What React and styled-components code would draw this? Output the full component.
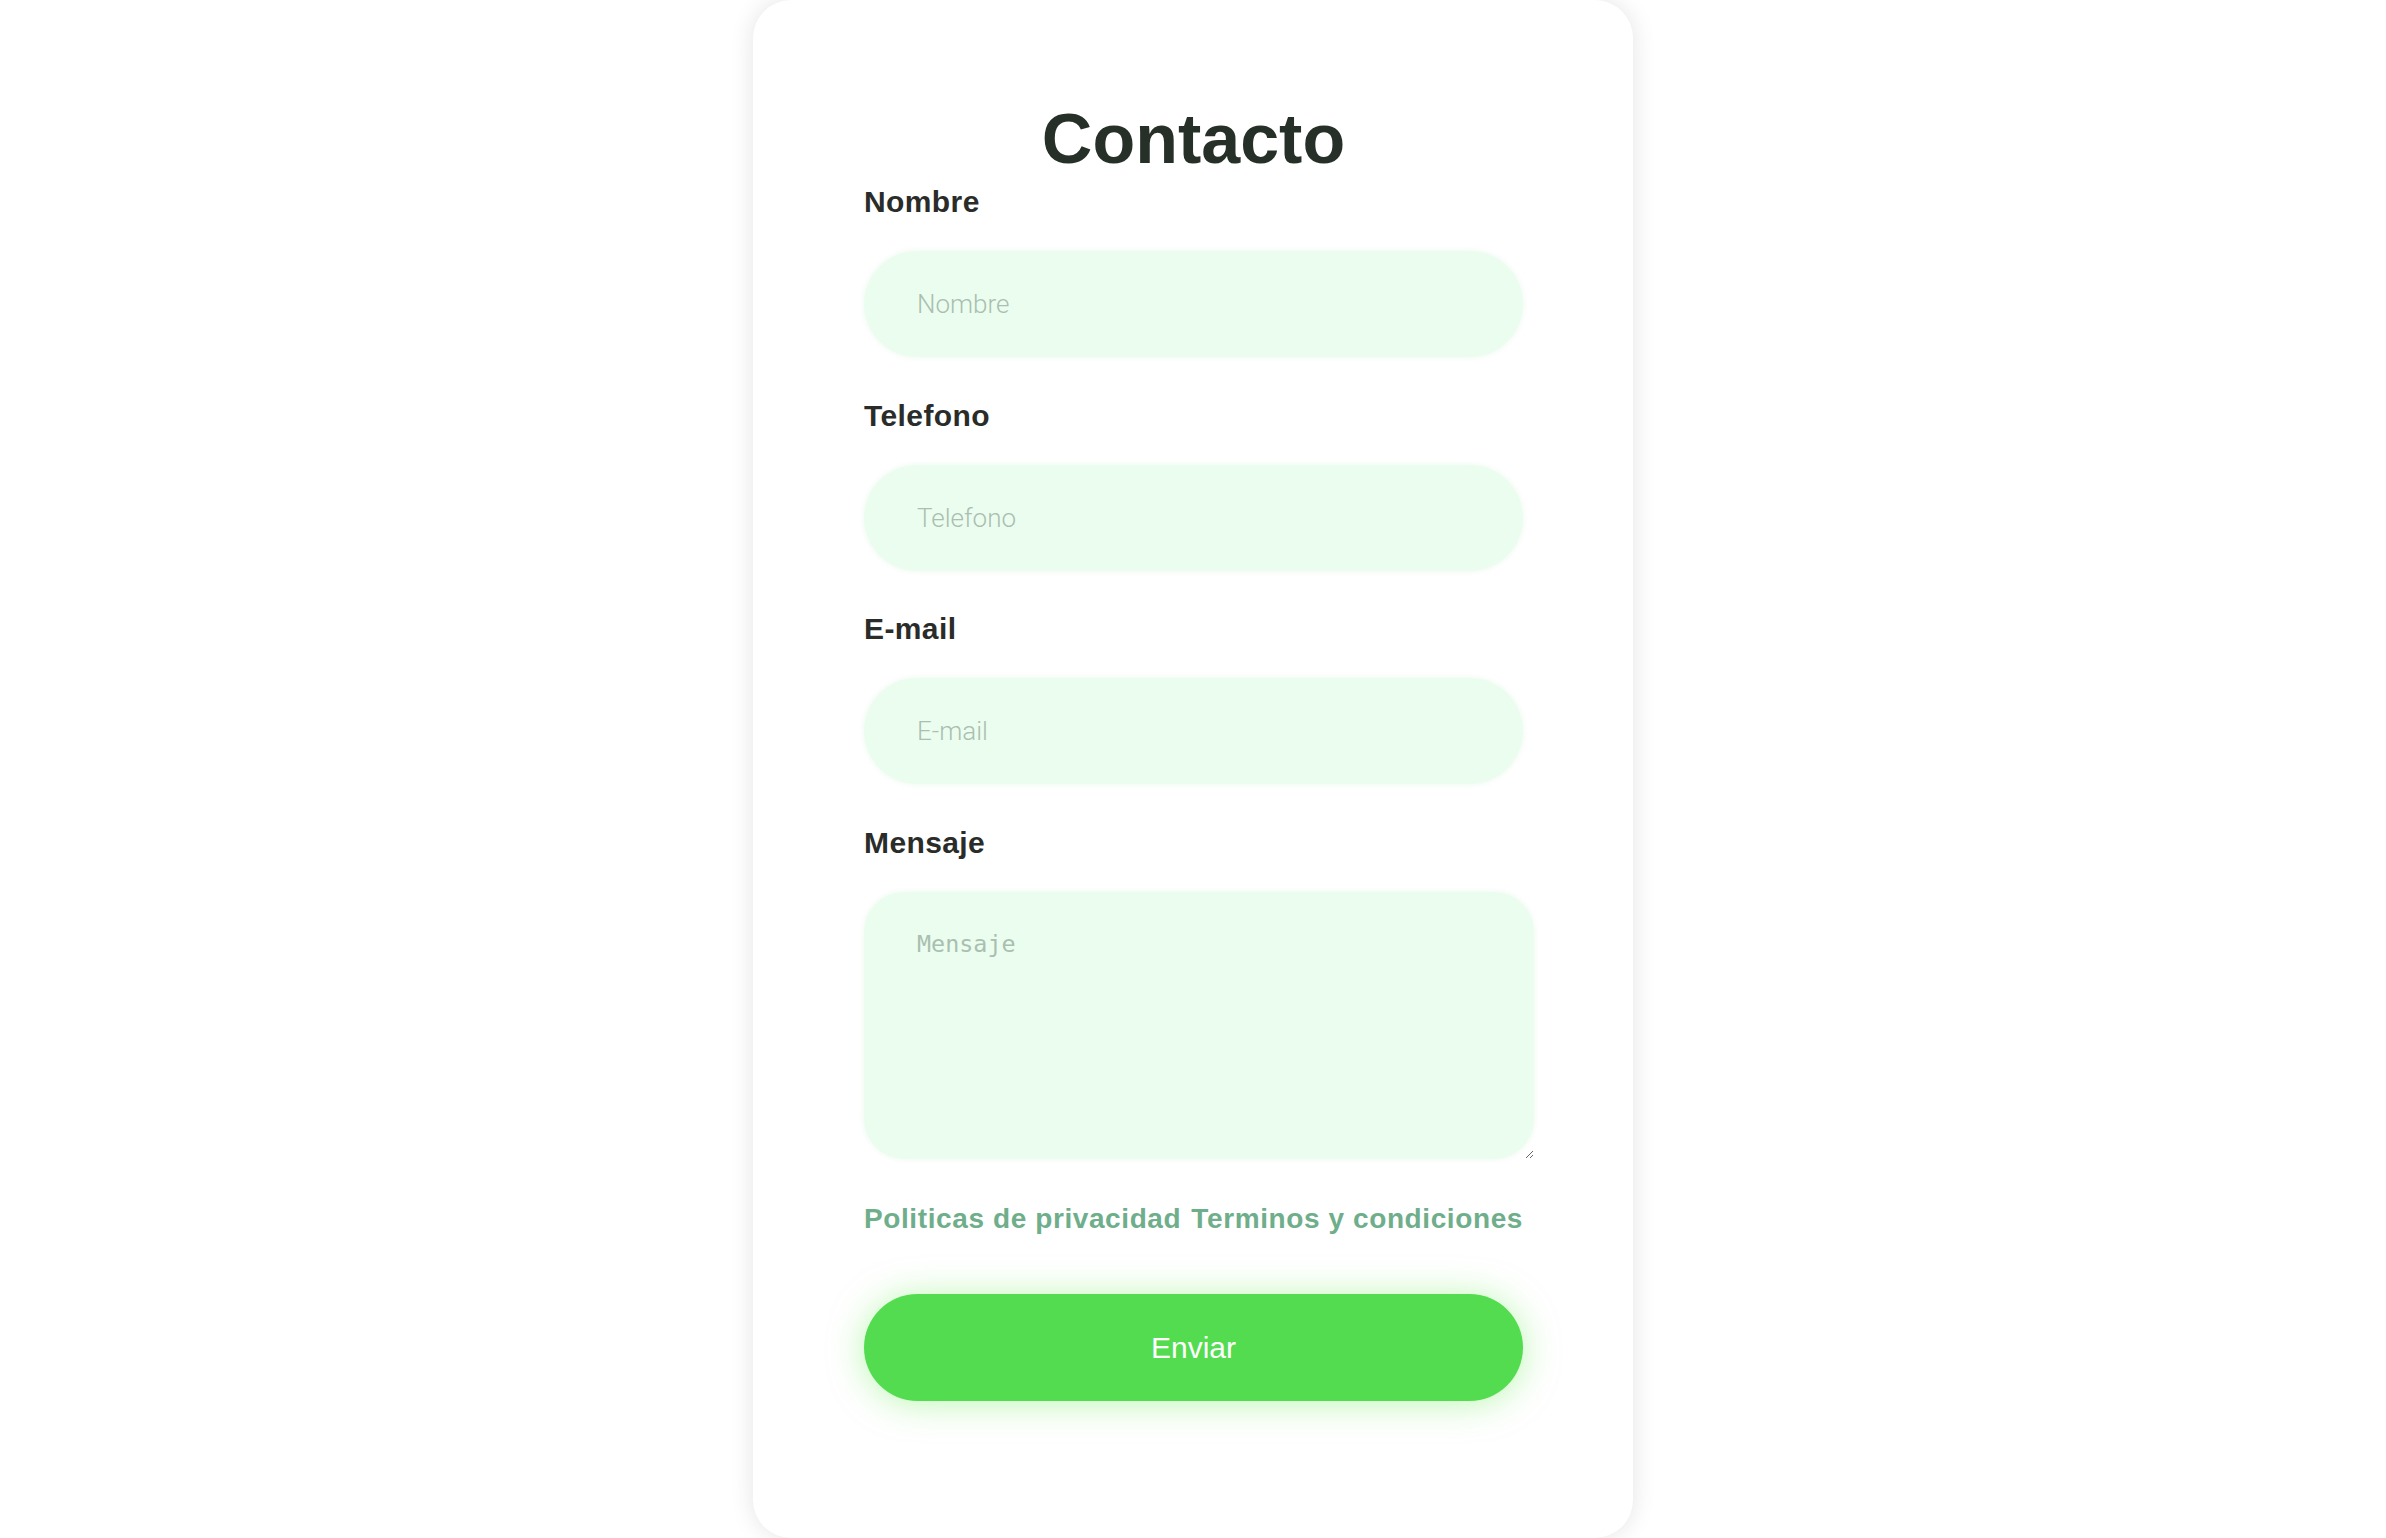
import styled, { createGlobalStyle } from "styled-components"

const GlobalStyle = createGlobalStyle`
  html, body {
    margin: 0;
    padding: 0;
    background: #ffffff;
  }
  body {
    font-family: "Liberation Sans", Arial, sans-serif;
    overflow: hidden;
  }
`;

export default function App() {
  return (
    <>
      <GlobalStyle />
      <Page>
        <Card>
          <Title>Contacto</Title>
          <Form onSubmit={(e) => e.preventDefault()}>
            <Field>
              <Label htmlFor="nombre">Nombre</Label>
              <Input id="nombre" type="text" placeholder="Nombre" />
            </Field>
            <Field>
              <Label htmlFor="telefono">Telefono</Label>
              <Input id="telefono" type="tel" placeholder="Telefono" />
            </Field>
            <Field>
              <Label htmlFor="email">E-mail</Label>
              <Input id="email" type="email" placeholder="E-mail" />
            </Field>
            <Field>
              <Label htmlFor="mensaje">Mensaje</Label>
              <Textarea id="mensaje" placeholder="Mensaje" />
            </Field>

            {/* Links */}
            <LinkRow>
              <LegalLink href="#">Politicas de privacidad</LegalLink>
              <LegalLink href="#">Terminos y condiciones</LegalLink>
            </LinkRow>

            <SendButton type="submit">Enviar</SendButton>
          </Form>
        </Card>
      </Page>
    </>
  )
}

const Page = styled.div`
  display: flex;
  justify-content: center;
  min-height: 100vh;
`;

const Card = styled.div`
  box-sizing: border-box;
  width: 880px;
  height: 1538px;
  padding: 99px 110px 0 111px;
  background: #ffffff;
  border-radius: 38px;
  box-shadow: 0 0 24px rgba(0, 0, 0, 0.11);
  display: flex;
  flex-direction: column;
`;

const Title = styled.h1`
  margin: 0 0 6px;
  text-align: center;
  font-family: "Liberation Sans", Arial, sans-serif;
  font-size: 70px;
  font-weight: 700;
  line-height: 80px;
  color: #263028;
`;

const Form = styled.form`
  display: flex;
  flex-direction: column;
`;

const Field = styled.div`
  display: flex;
  flex-direction: column;
  margin-bottom: 41.5px;
`;

const Label = styled.label`
  margin-bottom: 31.5px;
  font-size: 30px;
  line-height: 34.5px;
  font-weight: 700;
  letter-spacing: 0.4px;
  color: #2a2c2a;
`;

const Input = styled.input`
  box-sizing: border-box;
  width: 659px;
  height: 106px;
  padding: 0 53px;
  border: none;
  outline: none;
  border-radius: 53px;
  background: #ebfdef;
  box-shadow: 0 0 6px rgba(228, 246, 232, 0.7);
  font-family: Roboto, "Liberation Sans", sans-serif;
  font-weight: 300;
  font-size: 26px;
  color: #3a4a3e;

  &::placeholder {
    color: #aabfb0;
  }
`;

const Textarea = styled.textarea`
  box-sizing: border-box;
  width: 670px;
  height: 267px;
  padding: 38px 53px 30px;
  border: none;
  outline: none;
  border-radius: 40px;
  background: #ebfdef;
  box-shadow: 0 0 6px rgba(228, 246, 232, 0.7);
  font-family: "DejaVu Sans Mono", monospace;
  font-size: 23.4px;
  color: #3a4a3e;

  &::placeholder {
    color: #aabfb0;
  }
`;

const LinkRow = styled.div`
  width: 659px;
  display: flex;
  justify-content: space-between;
  margin-top: 3px;
  margin-bottom: 59px;
`;

const LegalLink = styled.a`
  font-size: 28px;
  line-height: 32.2px;
  font-weight: 700;
  letter-spacing: 0.6px;
  color: #6fae8b;
  text-decoration: none;
`;

const SendButton = styled.button`
  width: 659px;
  height: 107px;
  border: none;
  border-radius: 54px;
  background: #53dc4f;
  box-shadow: 0 2px 34px rgba(120, 240, 100, 0.5);
  font-family: "Liberation Sans", Arial, sans-serif;
  font-size: 30px;
  color: #ffffff;
  cursor: pointer;
`;
